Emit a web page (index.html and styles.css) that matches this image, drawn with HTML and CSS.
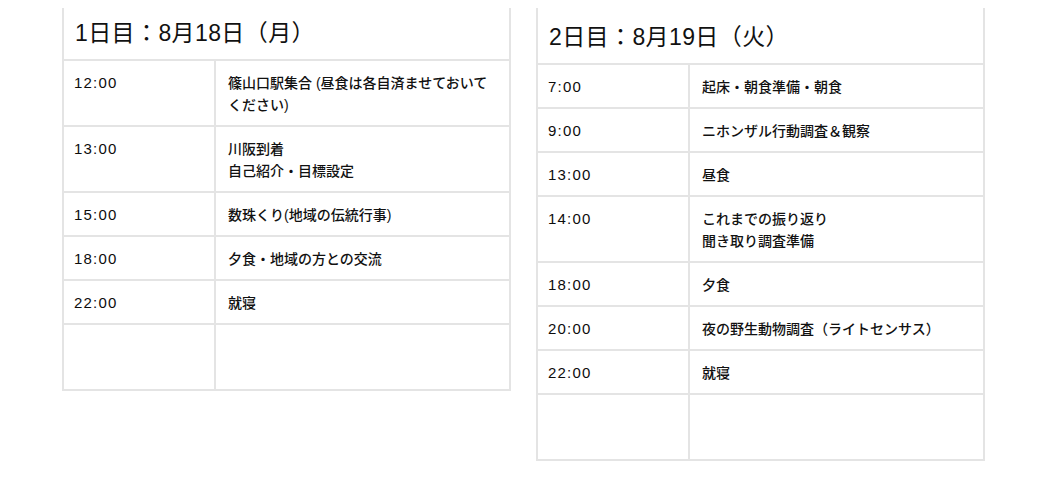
FILE: index.html
```html
<!DOCTYPE html>
<html lang="ja">
<head>
<meta charset="utf-8">
<title>日程</title>
<link rel="stylesheet" href="styles.css">
</head>
<body>
<div class="page">
  <table class="sched sched-day1">
    <colgroup><col class="col-time"><col class="col-desc"></colgroup>
    <thead>
      <tr><th colspan="2" class="title">1日目：8月18日（月）</th></tr>
    </thead>
    <tbody>
      <tr><td class="time">12:00</td><td class="desc">篠山口駅集合 (昼食は各自済ませておいてください)</td></tr>
      <tr><td class="time">13:00</td><td class="desc">川阪到着<br>自己紹介・目標設定</td></tr>
      <tr><td class="time">15:00</td><td class="desc">数珠くり(地域の伝統行事)</td></tr>
      <tr><td class="time">18:00</td><td class="desc">夕食・地域の方との交流</td></tr>
      <tr><td class="time">22:00</td><td class="desc">就寝</td></tr>
      <tr class="empty"><td class="time"></td><td class="desc"></td></tr>
    </tbody>
  </table>
  <table class="sched sched-day2">
    <colgroup><col class="col-time"><col class="col-desc"></colgroup>
    <thead>
      <tr><th colspan="2" class="title">2日目：8月19日（火）</th></tr>
    </thead>
    <tbody>
      <tr><td class="time">7:00</td><td class="desc">起床・朝食準備・朝食</td></tr>
      <tr><td class="time">9:00</td><td class="desc">ニホンザル行動調査＆観察</td></tr>
      <tr><td class="time">13:00</td><td class="desc">昼食</td></tr>
      <tr><td class="time">14:00</td><td class="desc">これまでの振り返り<br>聞き取り調査準備</td></tr>
      <tr><td class="time">18:00</td><td class="desc">夕食</td></tr>
      <tr><td class="time">20:00</td><td class="desc">夜の野生動物調査（ライトセンサス）</td></tr>
      <tr><td class="time">22:00</td><td class="desc">就寝</td></tr>
      <tr class="empty"><td class="time"></td><td class="desc"></td></tr>
    </tbody>
  </table>
</div>
</body>
</html>
```

FILE: styles.css
```css
html, body {
  margin: 0;
  padding: 0;
  background: #ffffff;
}

body {
  font-family: "Liberation Sans", "Noto Sans CJK JP", sans-serif;
  color: #111111;
}

.page {
  display: flex;
  align-items: flex-start;
  gap: 25px;
  padding: 8px 0 0 62px;
}

.sched {
  width: 449px;
  border-collapse: collapse;
  table-layout: fixed;
}

.col-time {
  width: 152px;
}

.sched th,
.sched td {
  border: 2px solid #e4e4e4;
}

.sched thead th {
  border-top: none;
}

.title {
  text-align: left;
  font-weight: normal;
  font-size: 23px;
  letter-spacing: 0.4px;
  line-height: 28px;
  color: #111111;
  padding: 11px 11px 12px 11px;
}

.sched-day2 .title {
  padding-top: 15px;
  padding-bottom: 12px;
}

.time {
  padding: 11px 10px 9px 10px;
  font-size: 15px;
  letter-spacing: 1.2px;
  line-height: 22px;
  color: #0d0d0d;
  vertical-align: top;
}

.desc {
  padding: 11px 12px 9px 12px;
  font-size: 14px;
  font-weight: 500;
  line-height: 22px;
  vertical-align: top;
}

.empty td {
  height: 44px;
}
```
